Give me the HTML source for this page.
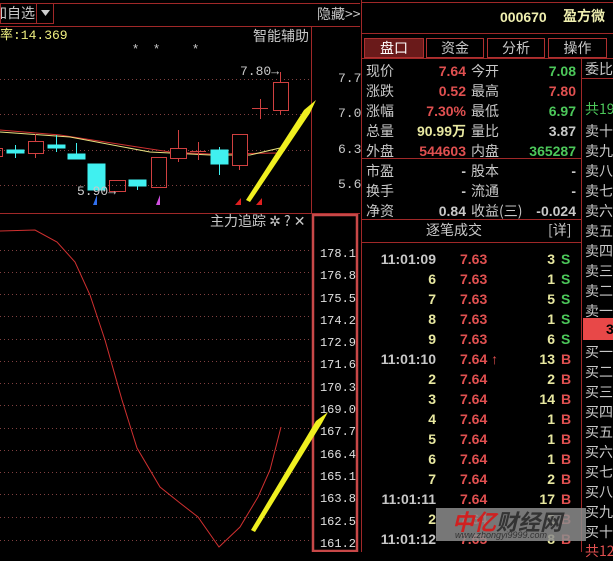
<!DOCTYPE html>
<html><head><meta charset="utf-8"><style>
*{margin:0;padding:0;box-sizing:border-box}
body{width:613px;height:552px;background:#000;overflow:hidden;position:relative;font-family:"Liberation Sans","Noto Sans CJK SC",sans-serif;color:#c8c8c8;font-size:14px}
.a{position:absolute;white-space:nowrap;line-height:16px}
.cn{font-family:"Noto Sans CJK SC","WenQuanYi Zen Hei",sans-serif;font-size:14px;color:#c8c8c8}
.n{font-family:"Liberation Sans",sans-serif;font-weight:bold;font-size:14px}
.r{color:#e05050}.g{color:#4cc85a}.y{color:#e8e8a0}.w{color:#c8c8c8}
.rt{text-align:right}
.hl{position:absolute;height:1px;background:#a02828}
.vl{position:absolute;width:1px;background:#a02828}
</style></head><body>
<div class="a cn" style="left:-7px;top:5px">加自选</div>
<svg width="613" height="552" style="position:absolute;left:0;top:0">
<g fill="none" stroke-width="1">
<line x1="0" y1="3.5" x2="360" y2="3.5" stroke="#a02828"/>
<line x1="0" y1="26.5" x2="360" y2="26.5" stroke="#a02828"/>
<rect x="0.5" y="3.5" width="53" height="20" stroke="#a02828"/>
<rect x="37" y="4" width="16" height="19" fill="#000" stroke="none"/>
<line x1="36.5" y1="3" x2="36.5" y2="23" stroke="#a02828"/>
<polygon points="41,10 50,10 45.5,16" fill="#d0d0d0" stroke="none"/>
<line x1="311.5" y1="27" x2="311.5" y2="214" stroke="#a02828"/>
<line x1="0" y1="213.5" x2="360" y2="213.5" stroke="#a02828"/>
<line x1="361.5" y1="0" x2="361.5" y2="552" stroke="#a02828"/>
<rect x="313" y="215" width="44" height="336" stroke="#c84848" stroke-width="2.5"/>
<g stroke="#804040" stroke-dasharray="1 3">
<line x1="0" y1="79.5" x2="310" y2="79.5"/><line x1="0" y1="114.5" x2="310" y2="114.5"/>
<line x1="0" y1="150.5" x2="310" y2="150.5"/><line x1="0" y1="185.5" x2="310" y2="185.5"/>
<line x1="0" y1="250.5" x2="310" y2="250.5"/><line x1="0" y1="272.5" x2="310" y2="272.5"/>
<line x1="0" y1="294.5" x2="310" y2="294.5"/><line x1="0" y1="316.5" x2="310" y2="316.5"/>
<line x1="0" y1="339.5" x2="310" y2="339.5"/><line x1="0" y1="361.5" x2="310" y2="361.5"/>
<line x1="0" y1="383.5" x2="310" y2="383.5"/><line x1="0" y1="405.5" x2="310" y2="405.5"/>
<line x1="0" y1="428.5" x2="310" y2="428.5"/><line x1="0" y1="450.5" x2="310" y2="450.5"/>
<line x1="0" y1="472.5" x2="310" y2="472.5"/><line x1="0" y1="494.5" x2="310" y2="494.5"/>
<line x1="0" y1="517.5" x2="310" y2="517.5"/><line x1="0" y1="540.5" x2="310" y2="540.5"/>
</g>
<polyline points="0,130 60,135 170,152 210,154 280,153" stroke="#d03030"/>
<polyline points="0,132 70,137 150,152 210,155 250,155 280,148" stroke="#e8e080"/>
<g stroke="#d04040">
<rect x="-2.5" y="148.5" width="5" height="8"/>
<line x1="35.5" y1="134" x2="35.5" y2="158"/><rect x="28.5" y="141.5" width="15" height="12" fill="#000"/>
<rect x="151.5" y="157.5" width="15" height="30"/>
<line x1="178.5" y1="130" x2="178.5" y2="162"/><rect x="170.5" y="148.5" width="16" height="10" fill="#000"/>
<line x1="190" y1="151.5" x2="206" y2="151.5"/><line x1="198.5" y1="142" x2="198.5" y2="160"/>
<line x1="239.5" y1="165" x2="239.5" y2="170"/><rect x="232.5" y="134.5" width="15" height="31" fill="#000"/>
<line x1="252" y1="108.5" x2="268" y2="108.5"/><line x1="260.5" y1="99" x2="260.5" y2="119"/>
<line x1="280.5" y1="72" x2="280.5" y2="115"/><rect x="273.5" y="82.5" width="15" height="28" fill="#000"/>
<rect x="109.5" y="180.5" width="16" height="11"/>
</g>
<g fill="#40f0f0" stroke="#40f0f0">
<line x1="15.5" y1="145" x2="15.5" y2="158"/><rect x="7" y="150" width="17" height="3"/>
<line x1="56.5" y1="135" x2="56.5" y2="152"/><rect x="48" y="145" width="17" height="3"/>
<line x1="76.5" y1="143" x2="76.5" y2="159"/><rect x="68" y="154" width="17" height="5"/>
<rect x="88" y="164" width="17" height="26"/>
<line x1="137.5" y1="180" x2="137.5" y2="190"/><rect x="129" y="180" width="17" height="6"/>
<line x1="219.5" y1="147" x2="219.5" y2="175"/><rect x="211" y="150" width="17" height="14"/>
</g>
<polyline points="0,231 35,230 57,242 75,262 90,295 105,340 122,400 137,448 160,487 180,503 198,517 219,547 240,527 258,497 270,470 281,427" stroke="#d03030"/>
</g>
<polygon points="93,205 97,195 97,205" fill="#3070f0"/>
<polygon points="156,205 160,195 160,205" fill="#d050e0"/>
<polygon points="235,205 241,198 241,205" fill="#e02020"/>
<polygon points="256,205 262,198 262,205" fill="#e02020"/>
<polygon points="246,200 250,202 310,113 316,100 304,110" fill="#f0f020"/>
<polygon points="251,530 255,532 322,423 328,412 316,421" fill="#f0f020"/>
</svg>

<div class="a cn" style="left:317px;top:6px">隐藏&gt;&gt;</div>
<div class="a" style="left:0;top:28px;color:#f0f080;font-size:13px;font-family:'Liberation Mono','Noto Sans CJK SC',monospace">率:14.369</div>
<div class="a cn" style="left:253px;top:28px">智能辅助</div>
<div class="a" style="left:133px;top:41px;font-size:13px">*</div>
<div class="a" style="left:154px;top:41px;font-size:13px">*</div>
<div class="a" style="left:193px;top:41px;font-size:13px">*</div>
<div class="a" style="left:240px;top:64px;font-size:13px;font-family:'Liberation Mono',monospace">7.80→</div>
<div class="a" style="left:77px;top:184px;font-size:13px;font-family:'Liberation Mono',monospace">5.90→</div>
<div class="a" style="left:338px;top:71px;font-size:13px;font-family:'Liberation Mono',monospace">7.7</div>
<div class="a" style="left:338px;top:106px;font-size:13px;font-family:'Liberation Mono',monospace">7.0</div>
<div class="a" style="left:338px;top:142px;font-size:13px;font-family:'Liberation Mono',monospace">6.3</div>
<div class="a" style="left:338px;top:177px;font-size:13px;font-family:'Liberation Mono',monospace">5.6</div>
<div class="a cn" style="left:210px;top:213px">主力追踪 ✲ ? ✕</div>
<div class="a rt" style="left:316px;width:40px;top:243px;font-size:12px;font-family:'Liberation Mono',monospace;line-height:22.3px;color:#e0e0e0">178.1<br>176.8<br>175.5<br>174.2<br>172.9<br>171.6<br>170.3<br>169.0<br>167.7<br>166.4<br>165.1<br>163.8<br>162.5<br>161.2</div>

<div class="hl" style="left:362px;top:2px;width:251px"></div>
<div class="a n" style="left:500px;top:9px;color:#f0f0b0">000670</div>
<div class="a cn" style="left:563px;top:8px;color:#f0f0b0;font-weight:bold">盈方微</div>
<div class="hl" style="left:362px;top:33px;width:251px"></div>
<div class="a cn" style="left:364px;top:38px;width:60px;height:20px;background:#6a1a1a;border:1px solid #b03030;text-align:center;line-height:18px;color:#fff">盘口</div>
<div class="a cn" style="left:426px;top:38px;width:58px;height:20px;border:1px solid #b03030;text-align:center;line-height:18px">资金</div>
<div class="a cn" style="left:487px;top:38px;width:58px;height:20px;border:1px solid #b03030;text-align:center;line-height:18px">分析</div>
<div class="a cn" style="left:548px;top:38px;width:59px;height:20px;border:1px solid #b03030;text-align:center;line-height:18px">操作</div>
<div class="hl" style="left:362px;top:58px;width:251px"></div>
<div class="vl" style="left:581px;top:59px;height:493px"></div>

<div class="a cn" style="left:366px;top:61px;line-height:20px">现价<br>涨跌<br>涨幅<br>总量<br>外盘</div>
<div class="a n rt" style="left:400px;width:66px;top:61px;line-height:20px"><span class="r">7.64</span><br><span class="r">0.52</span><br><span class="r">7.30%</span><br><span class="y">90.99<span class="cn y">万</span></span><br><span class="r">544603</span></div>
<div class="a cn" style="left:471px;top:61px;line-height:20px">今开<br>最高<br>最低<br>量比<br>内盘</div>
<div class="a n rt" style="left:500px;width:76px;top:61px;line-height:20px"><span class="g">7.08</span><br><span class="r">7.80</span><br><span class="g">6.97</span><br><span class="w">3.87</span><br><span class="g">365287</span></div>
<div class="hl" style="left:362px;top:158px;width:219px"></div>
<div class="a cn" style="left:366px;top:161px;line-height:20px">市盈<br>换手<br>净资</div>
<div class="a n rt" style="left:400px;width:66px;top:161px;line-height:20px">-<br>-<br>0.84</div>
<div class="a cn" style="left:471px;top:161px;line-height:20px">股本<br>流通<br>收益(三)</div>
<div class="a n rt" style="left:500px;width:76px;top:161px;line-height:20px">-<br>-<br>-0.024</div>
<div class="hl" style="left:362px;top:219px;width:219px"></div>
<div class="a cn" style="left:426px;top:222px">逐笔成交</div>
<div class="a cn" style="left:548px;top:222px">[详]</div>
<div class="hl" style="left:362px;top:242px;width:219px"></div>

<div class="a n rt y" style="left:372px;width:64px;top:249px;line-height:20px"><span class="w">11:01:09</span><br>6<br>7<br>8<br>9<br><span class="w">11:01:10</span><br>2<br>3<br>4<br>5<br>6<br>7<br><span class="w">11:01:11</span><br>2<br><span class="w">11:01:12</span></div>
<div class="a n r" style="left:460px;top:249px;line-height:20px">7.63<br>7.63<br>7.63<br>7.63<br>7.63<br>7.64 ↑<br>7.64<br>7.64<br>7.64<br>7.64<br>7.64<br>7.64<br>7.64<br>7.64<br>7.65</div>
<div class="a n rt y" style="left:520px;width:35px;top:249px;line-height:20px">3<br>1<br>5<br>1<br>6<br>13<br>2<br>14<br>1<br>1<br>1<br>2<br>17<br>2<br>8</div>
<div class="a n" style="left:561px;top:249px;line-height:20px"><span class="g">S<br>S<br>S<br>S<br>S</span><br><span class="r">B<br>B<br>B<br>B<br>B<br>B<br>B<br>B<br>B<br>B</span></div>

<div class="a cn" style="left:585px;top:61px">委比</div>
<div class="hl" style="left:582px;top:78px;width:31px"></div>
<div class="a cn g" style="left:585px;top:101px">共19</div>
<div class="a cn" style="left:585px;top:121px;line-height:20px">卖十<br>卖九<br>卖八<br>卖七<br>卖六<br>卖五<br>卖四<br>卖三<br>卖二<br>卖一</div>
<div class="a" style="left:583px;top:318px;width:30px;height:22px;background:#e84848;color:#000;font-weight:bold;padding-left:23px;line-height:22px">3</div>
<div class="a cn" style="left:585px;top:342px;line-height:20px">买一<br>买二<br>买三<br>买四<br>买五<br>买六<br>买七<br>买八<br>买九<br>买十</div>
<div class="a cn r" style="left:585px;top:543px">共12</div>

<div class="a" style="left:436px;top:508px;width:150px;height:33px;background:rgba(140,140,140,0.85)"></div>
<div class="a" style="left:452px;top:508px;font-size:22px;font-weight:bold;font-style:italic;font-family:'Noto Sans CJK SC',sans-serif;line-height:26px"><span style="color:#d02020">中亿</span><span style="color:#333">财经网</span></div>
<div class="a" style="left:455px;top:530px;font-size:9px;color:#333;font-style:italic;line-height:10px">www.zhongyi9999.com</div>
</body></html>
